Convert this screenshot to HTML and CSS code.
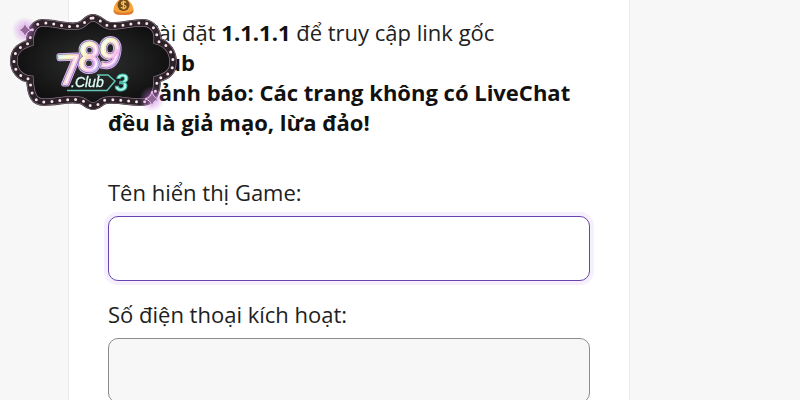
FILE: index.html
```html
<!DOCTYPE html>
<html lang="vi">
<head>
  <meta charset="UTF-8" />
  <meta name="viewport" content="width=device-width, initial-scale=1.0"/>
  <title>789Club</title>
  <link rel="stylesheet" href="styles.css">
</head>
<body>

  <div class="logo">
    <svg viewBox="8 12 172 100" role="img" aria-label="789 Club">
      <defs>
        <radialGradient id="board">
          <stop offset="0" stop-color="#303131"/>
          <stop offset="1" stop-color="#101011"/>
        </radialGradient>
        <linearGradient id="neon" x1="0" y1="0" x2="1" y2="1">
          <stop offset="0" stop-color="#bdf4ff"/>
          <stop offset="0.35" stop-color="#fff3b8"/>
          <stop offset="0.65" stop-color="#f5b5f5"/>
          <stop offset="1" stop-color="#8bd8f8"/>
        </linearGradient>
        <radialGradient id="glow">
          <stop offset="0" stop-color="#c77de0" stop-opacity="0.7"/>
          <stop offset="1" stop-color="#c77de0" stop-opacity="0"/>
        </radialGradient>
        <path id="frame" d="M93 18C100 18 102 25 110 26C122 27 134 22 144 23C152 24 158 30 157 41C168 44 173 53 173 62C173 72 167 76 157 79C157 92 153 102 142 102C130 102 120 99 107 100C101 100 99 106 93 106C87 106 85 100 79 100C67 98 58 102 44 102C34 102 31 95 30 79C20 78 14 70 14 61C14 50 21 46 30 43C30 32 33 24 42 23C56 23 66 28 78 26C85 25 86 18 93 18Z"/>
        <path id="spark" d="M0 -8Q1 -1 7 0Q1 1 0 8Q-1 1 -7 0Q-1 -1 0 -8Z"/>
      </defs>

      <!-- board with bulbs -->
      <use href="#frame" fill="url(#board)" stroke="#251e24" stroke-width="8"/>
      <use href="#frame" fill="none" stroke="#a58a9b" stroke-width="7"/>
      <use href="#frame" fill="none" stroke="#2c232a" stroke-width="6"/>
      <use href="#frame" class="bulbs"/>

      <!-- sparkles -->
      <circle cx="25" cy="30" r="13" fill="url(#glow)"/>
      <use href="#spark" x="25" y="30" fill="#8f6895" stroke="#efc4ee"/>
      <circle cx="152" cy="99" r="13" fill="url(#glow)"/>
      <use href="#spark" x="152" y="99" fill="#8f6895" stroke="#efc4ee"/>

      <!-- 789 -->
      <g class="digits digits-outer">
        <text x="58" y="84" transform="rotate(-2 66 68)">7</text>
        <text x="78" y="71" transform="rotate(2 87 56)">8</text>
        <text x="99" y="67" transform="rotate(10 108 51)">9</text>
      </g>
      <g class="digits digits-mid" aria-hidden="true">
        <text x="58" y="84" transform="rotate(-2 66 68)">7</text>
        <text x="78" y="71" transform="rotate(2 87 56)">8</text>
        <text x="99" y="67" transform="rotate(10 108 51)">9</text>
      </g>
      <g class="digits digits-inner" aria-hidden="true">
        <text x="58" y="84" transform="rotate(-2 66 68)">7</text>
        <text x="78" y="71" transform="rotate(2 87 56)">8</text>
        <text x="99" y="67" transform="rotate(10 108 51)">9</text>
      </g>

      <!-- .Club 3 -->
      <path d="M67 90.500H107L115 81L108 75H97" fill="none" stroke="#62c7b9" stroke-width="1.500"/>
      <text class="club" x="71" y="87">.Club</text>
      <text class="three" x="115" y="91">3</text>
    </svg>
  </div>

  <main class="card">
    <p class="notice">
      <svg class="emoji" viewBox="0 0 24 24" aria-hidden="true">
        <path d="M8 2L16 2L15 7C20 10 22 15 22 18C22 22 19 23 12 23C5 23 2 22 2 18C2 14 5 9 9 7Z" fill="#f5a53b"/>
        <path d="M2 18C2 22 5 23 12 23C19 23 22 22 22 18C18 21 7 22 2 18Z" fill="#df7c32"/>
        <circle cx="12" cy="13" r="6" fill="#754a1b"/>
        <path d="M14.500 10.500C13 9 10 9.500 10 11.200C10 13.500 14.500 12.500 14.500 14.800C14.500 16.500 11 17 9.500 15.200M12 8.500V17.500" fill="none" stroke="#f6c653" stroke-width="1.300"/>
      </svg><br>
      <svg class="emoji" viewBox="0 0 24 24" aria-hidden="true">
        <rect x="6" y="1" width="13" height="22" rx="2" fill="#514b86"/>
        <rect x="8" y="4" width="9" height="15" fill="#8bc9f0"/>
      </svg>
      Cài đặt <b>1.1.1.1</b> để truy cập link gốc<br>
      <b>789Club</b><br>
      <svg class="emoji" viewBox="0 0 24 24" aria-hidden="true">
        <path d="M12 2L23 22H1Z" fill="#f5a13b"/>
        <path d="M12 9V15M12 17V19" stroke="#3b2b20" stroke-width="2"/>
      </svg>
      <b>Cảnh báo: Các trang không có LiveChat đều là giả mạo, lừa đảo!</b>
    </p>

    <form>
      <div class="field">
        <label for="display-name">Tên hiển thị Game:</label>
        <input class="active" type="text" id="display-name">
      </div>
      <div class="field">
        <label for="phone">Số điện thoại kích hoạt:</label>
        <input type="tel" id="phone">
      </div>
    </form>
  </main>

</body>
</html>
```
FILE: styles.css
```css
* {
  box-sizing: border-box;
}

body {
  margin: 0;
  padding: 0 170px 0 68px;
  background: #f7f7f7;
  color: #212121;
  font-family: "Open Sans", "Noto Sans", sans-serif;
  font-size: 22px;
  line-height: 30px;
  overflow: hidden;
}

.card {
  margin-top: -14px;
  padding: 0 39px 40px;
  background: #fff;
  border: 1px solid #ebebeb;
}

.notice {
  margin: 0 0 40px;
}

.notice b {
  color: #111;
}

.emoji {
  width: 31px;
  height: 24px;
  vertical-align: -5px;
}

.field {
  margin-bottom: 18px;
}

.field label {
  display: block;
  margin-bottom: 9px;
}

.field input {
  display: block;
  width: 100%;
  height: 65px;
  padding: 0 16px;
  font: inherit;
  background: #f7f7f7;
  border: 1px solid #8c8c8c;
  border-radius: 10px;
  outline: none;
}

.field input.active {
  background: #fff;
  border-color: #6944b0;
  box-shadow: 0 0 0 4px #f6effd;
}

.logo {
  position: fixed;
  top: 12px;
  left: 8px;
  width: 172px;
}

.logo svg {
  display: block;
  width: 100%;
}

.bulbs {
  fill: none;
  stroke: #fbe3e6;
  stroke-width: 3;
  stroke-linecap: round;
  stroke-dasharray: 0 8;
}

.digits {
  font-family: "Liberation Sans Narrow", "Roboto", sans-serif;
  font-size: 40px;
  stroke-linejoin: round;
}

.digits-outer {
  fill: #dcb2f2;
  stroke: #dcb2f2;
  stroke-width: 5;
}

.digits-mid {
  fill: none;
  stroke: #5a6391;
  stroke-width: 3;
}

.digits-inner {
  fill: #fff;
  stroke: url(#neon);
  stroke-width: 2;
}

.club {
  font-family: "Liberation Sans", sans-serif;
  font-size: 14px;
  font-style: italic;
  fill: #d8fff6;
  stroke: #d8fff6;
  stroke-width: 0.300;
}

.three {
  font-family: "Liberation Sans Narrow", "Roboto", sans-serif;
  font-size: 24px;
  font-style: italic;
  font-weight: bold;
  fill: #b4f7e9;
  stroke: #45b8a8;
  stroke-width: 1;
}
```
